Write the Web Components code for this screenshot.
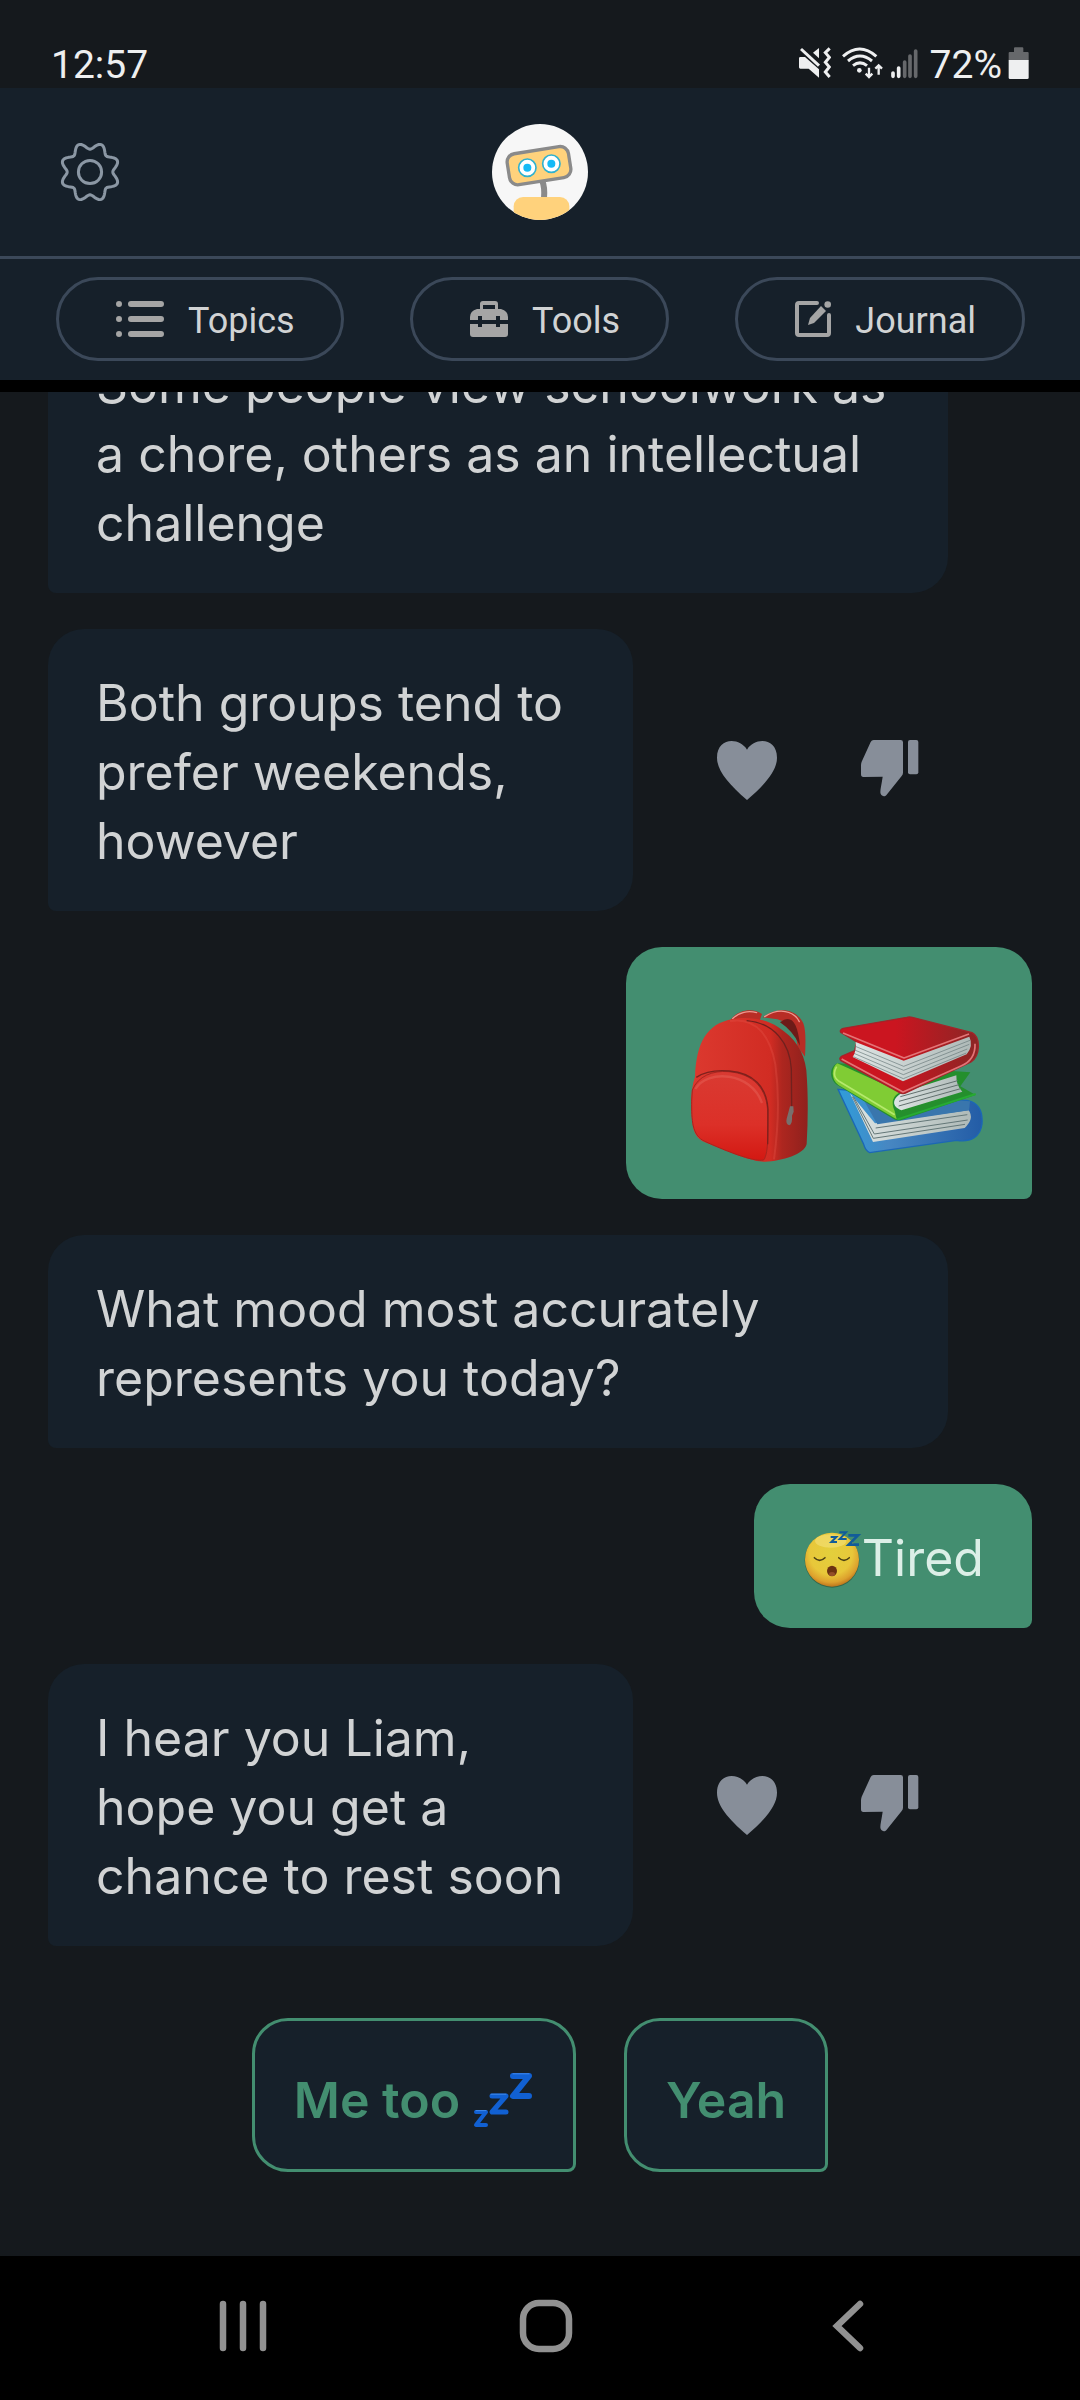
<!DOCTYPE html>
<html lang="en">
<head>
<meta charset="utf-8">
<meta name="viewport" content="width=device-width, initial-scale=1">
<title>Chat</title>
<style>
  :root {
    --page: #15191d;
    --surface: #16202a;
    --line: #3b4859;
    --green: #438e70;
    --text: #d1d3d4;
    --muted: #878e99;
  }
  body { margin: 0; background: var(--page); color: var(--text); font-family: Inter, "Liberation Sans", sans-serif; }
</style>
</head>
<body>
<chat-app></chat-app>

<template id="t-app">
  <style>
    :host { display: flex; flex-direction: column; height: 100vh; overflow: hidden; }
    chat-log { flex: 1; min-height: 0; }
  </style>
  <status-bar></status-bar>
  <app-header></app-header>
  <tab-strip>
    <pill-button icon="list">Topics</pill-button>
    <pill-button icon="toolbox">Tools</pill-button>
    <pill-button icon="journal">Journal</pill-button>
  </tab-strip>
  <chat-log>
    <chat-message>Some people view schoolwork as<br>a chore, others as an intellectual<br>challenge</chat-message>
    <chat-message rated>Both groups tend to<br>prefer weekends,<br>however</chat-message>
    <chat-message mine><ui-icon name="backpack"></ui-icon><ui-icon name="books"></ui-icon></chat-message>
    <chat-message>What mood most accurately<br>represents you today?</chat-message>
    <chat-message mine><ui-icon name="sleepy"></ui-icon>Tired</chat-message>
    <chat-message rated>I hear you Liam,<br>hope you get a<br>chance to rest soon</chat-message>
    <quick-reply slot="replies">Me too <ui-icon name="zzz"></ui-icon></quick-reply>
    <quick-reply slot="replies">Yeah</quick-reply>
  </chat-log>
  <nav-bar></nav-bar>
</template>

<template id="t-status">
  <style>
    :host { display: flex; justify-content: space-between; align-items: flex-end; height: 88px; padding: 0 51px; box-sizing: border-box; font: 39px/46px Roboto, sans-serif; color: #eeeff0; }
    .right { display: flex; align-items: center; }
    .wifi { margin: 0 7px 0 11px; }
    .pct { margin: 0 6px 0 12px; }
  </style>
  <time>12:57</time>
  <div class="right">
    <ui-icon name="mute"></ui-icon><ui-icon class="wifi" name="wifi"></ui-icon><ui-icon name="signal"></ui-icon>
    <span class="pct">72%</span><ui-icon name="battery"></ui-icon>
  </div>
</template>

<template id="t-header">
  <style>
    :host { display: grid; grid-template-columns: 1fr auto 1fr; align-items: center; height: 168px; padding: 0 60px; background: var(--surface); border-bottom: 3px solid var(--line); }
    button { all: unset; cursor: pointer; display: block; justify-self: start; }
  </style>
  <button aria-label="Settings"><ui-icon name="gear"></ui-icon></button>
  <button aria-label="Profile"><ui-icon name="robot"></ui-icon></button>
</template>

<template id="t-tabs">
  <style>
    :host { display: flex; justify-content: space-between; padding: 18px 55px 19px 56px; background: var(--surface); border-bottom: 12px solid #000; }
  </style>
  <slot></slot>
</template>

<template id="t-pill">
  <style>
    :host { display: block; }
    button { display: flex; align-items: center; gap: 24px; height: 84px; box-sizing: border-box; padding: 0 46px 0 57px; border: 3px solid var(--line); border-radius: 42px; background: none; color: var(--text); font: 36px/44px Roboto, sans-serif; cursor: pointer; }
    span { padding-top: 4px; }
  </style>
  <button><ui-icon></ui-icon><span><slot></slot></span></button>
</template>

<template id="t-log">
  <style>
    :host { display: flex; flex-direction: column; justify-content: flex-end; gap: 36px; overflow: hidden; padding: 0 48px 84px; }
    .replies { display: flex; justify-content: center; gap: 48px; padding-top: 36px; }
  </style>
  <slot></slot>
  <div class="replies"><slot name="replies"></slot></div>
</template>

<template id="t-message">
  <style>
    :host { display: flex; align-items: center; gap: 84px; flex: none; font-size: 50px; line-height: 69px; }
    .bubble { box-sizing: border-box; width: 900px; max-width: 100%; padding: 40px 48px 35px; border-radius: 36px 36px 36px 8px; background: var(--surface); }
    :host([rated]) .bubble { width: 585px; }
    :host([mine]) { justify-content: flex-end; }
    :host([mine]) .bubble { display: flex; width: auto; border-radius: 36px 36px 8px 36px; background: var(--green); color: #dcefe7; }
    button { all: unset; display: none; cursor: pointer; }
    :host([rated]) button { display: block; }
  </style>
  <div class="bubble"><slot></slot></div>
  <button aria-label="Like"><ui-icon name="heart"></ui-icon></button>
  <button aria-label="Dislike"><ui-icon name="thumb"></ui-icon></button>
</template>

<template id="t-reply">
  <style>
    :host { display: block; }
    button { display: flex; gap: 12px; padding: 45px 39px 34px; border: 3px solid var(--green); border-radius: 36px 36px 8px 36px; background: var(--surface); color: var(--green); font: 600 50px/69px Inter, "Liberation Sans", sans-serif; cursor: pointer; }
  </style>
  <button><slot></slot></button>
</template>

<template id="t-nav">
  <style>
    :host { display: flex; justify-content: space-around; align-items: center; height: 144px; padding: 0 80px 4px 92px; box-sizing: border-box; background: #000; }
    button { all: unset; display: block; cursor: pointer; }
  </style>
  <button aria-label="Recent apps"><ui-icon name="recents"></ui-icon></button>
  <button aria-label="Home"><ui-icon name="home"></ui-icon></button>
  <button aria-label="Back"><ui-icon name="back"></ui-icon></button>
</template>

<script>
  // Outline of the settings cog: a ring whose radius swells eight times per turn.
  const cogPoints = [];
  for (let i = 0; i < 144; i++) {
    const a = i * Math.PI / 72;
    const r = 26.2 + 3.4 * Math.cos(8 * (a - Math.PI / 8));
    cogPoints.push((30 + r * Math.cos(a)).toFixed(2) + ',' + (30 + r * Math.sin(a)).toFixed(2));
  }

  // name: [width, height, viewBox, markup]
  const ICONS = {
    mute: [32, 36, '84 48 96 108', `
      <path d="M88 78h14l42 37v25l-31-27H88q-4 0-4-4V82q0-4 4-4z" fill="#eeeff0"/>
      <path d="M144 51v31l-18-17z" fill="#eeeff0"/>
      <path d="M90 54l54 50" stroke="#eeeff0" stroke-width="9"/>
      <path d="M176 52l-13 13 12 14-12 15 12 14-12 15 13 15" fill="none" stroke="#eeeff0" stroke-width="9"/>`],
    wifi: [42, 36, '214 48 126 108', `
      <g fill="none" stroke="#eeeff0" stroke-width="9">
        <path d="M217 76q50-44 100 0"/><path d="M232 90q36-30 72 0"/><path d="M247 104q21-17 42 0"/>
        <path d="M295 110v26M285 128l10 10 10-10M324 131v-26M314 113l10-10 10 10" stroke-width="7"/>
      </g><circle cx="266" cy="118" r="7" fill="#eeeff0"/>`],
    signal: [27, 36, '360 48 81 108', `
      <g stroke-width="11" stroke-linecap="round">
        <path d="M366 126v10M383 111v25" stroke="#eeeff0"/>
        <path d="M401 93v43M417 75v61M434 60v76" stroke="#66686b"/>
      </g>`],
    battery: [21, 36, '715 48 63 108', `
      <path d="M733 52q0-3 3-3h22q3 0 3 3v11h13q3 0 3 3v22h-60V66q0-3 3-3h13z" fill="#66686b"/>
      <path d="M717 87h60v53q0 4-4 4h-52q-4 0-4-4z" fill="#eeeff0"/>`],
    gear: [60, 60, '0 0 60 60', `
      <g fill="none" stroke="#8b97a4" stroke-width="3" stroke-linejoin="round">
        <polygon points="${cogPoints.join(' ')}"/><circle cx="30" cy="30" r="11.6"/>
      </g>`],
    robot: [96, 96, '66 42 288 288', `
      <clipPath id="face"><circle cx="210" cy="186" r="144"/></clipPath>
      <g clip-path="url(#face)">
        <rect x="66" y="42" width="288" height="288" fill="#f7f7f7"/>
        <path d="M216 210q9 22 6 54" fill="none" stroke="#8a8a8a" stroke-width="18"/>
        <rect x="131" y="261" width="167" height="100" rx="28" fill="#ffd27c"/>
        <rect x="114" y="120" width="186" height="94" rx="25" transform="rotate(-9 207 167)" fill="#ffd27c" stroke="#8a8a8a" stroke-width="10"/>
        <g fill="#fff" stroke="#30b1cf" stroke-width="5"><circle cx="172" cy="173" r="26"/><circle cx="244" cy="161" r="26"/></g>
        <g fill="#15baf6"><circle cx="172" cy="173" r="12"/><circle cx="244" cy="161" r="12"/></g>
      </g>`],
    list: [48, 36, '0 0 48 36', `
      <g stroke="#a5a5a5" stroke-width="6" stroke-linecap="round"><path d="M3 3h0M3 18h0M3 33h0M15 3h30M15 18h30M15 33h30"/></g>`],
    toolbox: [38, 36, '0 0 38 36', `
      <path d="M10 8V3q0-3 3-3h12q3 0 3 3v5h3q7 2 7 8v3h-8v-4h-4v4H12v-4H8v4H0v-3q0-6 7-8zM13 8h12V4H13z" fill="#a5a5a5" fill-rule="evenodd"/>
      <path d="M0 23h8v3h4v-3h14v3h4v-3h8v10q0 3-3 3H3q-3 0-3-3z" fill="#a5a5a5"/>`],
    journal: [36, 36, '0 0 36 36', `
      <path d="M22 2H4Q2 2 2 4v28q0 2 2 2h28q2 0 2-2V14" fill="none" stroke="#a5a5a5" stroke-width="4" stroke-linecap="round"/>
      <path d="M26 5l5 5-12 12-6 2 2-7z" fill="#a5a5a5"/><circle cx="32.700" cy="3.500" r="3.300" fill="#a5a5a5"/>`],
    heart: [60, 60, '0 0 180 180', `
      <path d="M90 29C113-9 180-8 180 53c0 38-33 78-90 127C33 131 0 91 0 53 0-8 67-9 90 29z" fill="#878e99"/>`],
    thumb: [60, 60, '0 0 180 180', `
      <path d="M38 0h81q7 0 7 7v91q0 6-4 10l-45 56c-7 9-19 4-19-7 0-10 4-26 7-47l-58 1q-7 0-7-8V76q0-5 2-11L29 6q3-6 9-6z" fill="#878e99"/>
      <rect x="141" width="31" height="103" rx="6" fill="#878e99"/>`],
    backpack: [155, 177, '222 171 465 531', `
      <defs>
        <linearGradient id="bag" x1="0" x2="1"><stop offset="0" stop-color="#dc392f"/><stop offset=".68" stop-color="#d12c23"/><stop offset=".78" stop-color="#ad261f"/><stop offset="1" stop-color="#8f211d"/></linearGradient>
        <linearGradient id="pocket" x1="0" x2="0" y1="0" y2="1"><stop offset="0" stop-color="#d93a32"/><stop offset=".6" stop-color="#dc3028"/><stop offset="1" stop-color="#d31812"/></linearGradient>
      </defs>
      <path d="M390 272c22-35 72-39 96-20l-10 28zM488 262c42-32 99-30 122 18 8 22 7 58 5 100l-22-30c-5-50-25-72-61-82z" fill="#b82d25"/>
      <path d="M540 277c32-25 53-4 60 70q-22-45-60-70z" fill="#6d1b18"/>
      <path d="M398 266c18-20 48-25 72-18M494 260c42-28 88-18 104 15" stroke="#ed9990" stroke-width="4" fill="none" stroke-linecap="round"/>
      <path d="M285 440c4-103 36-158 110-172 42-10 102-3 139 23 50 32 78 72 85 130 6 76 5 150 1 221-7 31-73 51-125 53-30 2-90-20-180-58-24-11-34-26-38-58-6-57-5-101 8-139z" fill="url(#bag)"/>
      <path d="M390 273c85-14 122 56 136 130 12 88 9 190-4 285" stroke="#e65449" stroke-width="6" fill="none" opacity=".35"/>
      <path d="M440 272c83 6 130 69 134 145l1 112" fill="none" stroke="#70211e" stroke-width="4"/>
      <path d="M277 480c17-42 62-59 108-55 76 6 117 52 118 124 1 52 3 118-11 140-14 8-75-8-178-55-39-18-39-65-39-120z" fill="url(#pocket)" stroke="#a6251f" stroke-width="3"/>
      <path d="M289 442c30-20 66-22 99-19 73 6 112 48 116 115l-1 105" fill="none" stroke="#7e211d" stroke-width="4"/>
      <path d="M286 477c36-60 167-52 200 42" fill="none" stroke="#e86b62" stroke-width="7" opacity=".4"/>
      <path d="M570 529h10l1 16-5 12q2 25-8 29-12-5-8-20z" fill="#77706d"/>`],
    books: [155, 177, '687 171 465 531', `
      <defs>
        <linearGradient id="red"><stop offset=".4" stop-color="#cb1520"/><stop offset="1" stop-color="#8b2625"/></linearGradient>
        <linearGradient id="page"><stop offset="0" stop-color="#dde4e3"/><stop offset="1" stop-color="#afbab8"/></linearGradient>
        <linearGradient id="blue"><stop offset="0" stop-color="#309dda"/><stop offset=".35" stop-color="#4787c2"/><stop offset="1" stop-color="#235ca6"/></linearGradient>
      </defs>
      <path d="M714 478l390 34c30 7 45 31 42 70-4 37-33 56-76 49l-261 37q-12-5-18-25z" fill="url(#blue)" stroke="#1c67b5" stroke-width="4"/>
      <path d="M750 490l75 90 281-39q18 25-12 53l-275 42z" fill="url(#page)"/>
      <path d="M780 490l330 24-3 27-275 42z" fill="#3976ad"/>
      <path d="M760 500l63 112 280-42M757 500l63 125 275-42M827 594l275-40" fill="none" stroke="#647778" stroke-width="3"/>
      <path d="M712 400c-28 13-24 56 8 70l162 98q10 5 25 1l220-74-46-26 30-42z" fill="#248f2d"/>
      <path d="M712 400l190 86q-36 17-18 57l6 25L716 466c-24-17-22-54-4-66z" fill="#80cc34"/>
      <path d="M909 487l160-51q-1 31 18 49l-183 56c-29-12-30-34 5-54z" fill="url(#page)"/>
      <path d="M901 500l172-48M897 514l180-50M896 528l186-52" stroke="#62706e" stroke-width="3"/>
      <path d="M710 410q-18 30 12 47l162 97" fill="none" stroke="#b5e96c" stroke-width="5"/>
      <path d="M892 568l235-76" stroke="#27ab32" stroke-width="6"/>
      <path d="M722 307q-4-8 8-12l190-33q8-2 17 0l179 46c27 14 25 70-3 88L919 488q-10 5-20 0l-176-96q-8-7 3-14l38-16 6-26z" fill="url(#red)" stroke="#a3252a" stroke-width="4"/>
      <path d="M767 336l144 56 197-72q13 27-8 53l-191 81-151-73q12-17 9-45z" fill="url(#page)"/>
      <path d="M766 349l145 60 199-78M764 360l147 61 197-78M762 370l148 64 192-77M760 380l150 66 189-77" fill="none" stroke="#68797a" stroke-width="2"/>
      <path d="M729 309l183 75 195-72M725 387l184 99 174-78q44-19 42-67" fill="none" stroke="#e37477" stroke-width="5" stroke-linejoin="round"/>`],
    sleepy: [60, 69, '309 192 180 207', `
      <defs><radialGradient id="skin" cx=".48" cy=".38" r=".64"><stop offset="0" stop-color="#e3cf3c"/><stop offset=".62" stop-color="#e8c73a"/><stop offset=".84" stop-color="#dda12d"/><stop offset="1" stop-color="#b66a18"/></radialGradient></defs>
      <circle cx="399" cy="301" r="82" fill="#356749"/>
      <circle cx="399" cy="299" r="81" fill="url(#skin)"/>
      <ellipse cx="395" cy="243" rx="47" ry="20" fill="#fff2a6" opacity=".35"/>
      <path d="M346 293q16 16 32 0M419 293q16 16 32 0" fill="none" stroke="#4c4015" stroke-width="4.5" stroke-linecap="round"/>
      <ellipse cx="399" cy="333" rx="15" ry="16" fill="#6b3211"/><ellipse cx="399" cy="342" rx="9" ry="6" fill="#934e28"/>
      <g fill="none" stroke="#125c99" stroke-width="6"><polyline points="395,231 412,231 397,246 414,246"/><polyline points="421,217 441,217 422,237 443,237"/><polyline points="448,226 477,226 449,254 480,254" stroke-width="8"/></g>`],
    zzz: [62, 69, '0 4 62 69', `
      <g fill="none" stroke="#1160d2" stroke-linejoin="round" stroke-linecap="round">
        <polyline points="4,50 14,50 4,63 14,63" stroke-width="4"/>
        <polyline points="20,34 34,34 20,50 34,50" stroke-width="5"/>
        <polyline points="41,14 57,14 41,34 57,34" stroke-width="6"/>
      </g>
      <path d="M4 48.600h10M19 32.200h15M41 11.800h16" stroke="#3f88ea" stroke-width="1" stroke-linecap="round"/>`],
    recents: [54, 54, '0 0 54 54', `
      <path d="M7 5v44M27 5v44M47 5v44" stroke="#919191" stroke-width="6.500" stroke-linecap="round"/>`],
    home: [54, 54, '0 0 54 54', `
      <rect x="4" y="4" width="46" height="46" rx="16" fill="none" stroke="#919191" stroke-width="6.500"/>`],
    back: [54, 54, '0 0 54 54', `
      <path d="M38 5L15 27l23 22" fill="none" stroke="#919191" stroke-width="6.500" stroke-linecap="round"/>`]
  };

  class UiIcon extends HTMLElement {
    static observedAttributes = ['name'];
    constructor() { super(); this.attachShadow({ mode: 'open' }); }
    attributeChangedCallback() {
      const [w, h, box, body] = ICONS[this.getAttribute('name')];
      this.shadowRoot.innerHTML = `<style>:host{display:block;flex:none}svg{display:block}</style>
        <svg width="${w}" height="${h}" viewBox="${box}" aria-hidden="true">${body}</svg>`;
    }
  }
  customElements.define('ui-icon', UiIcon);

  const fromTemplate = id => class extends HTMLElement {
    constructor() {
      super();
      this.attachShadow({ mode: 'open' }).append(document.getElementById(id).content.cloneNode(true));
    }
  };

  customElements.define('status-bar', fromTemplate('t-status'));
  customElements.define('app-header', fromTemplate('t-header'));
  customElements.define('tab-strip', fromTemplate('t-tabs'));
  customElements.define('pill-button', class extends fromTemplate('t-pill') {
    connectedCallback() {
      this.shadowRoot.querySelector('ui-icon').setAttribute('name', this.getAttribute('icon'));
    }
  });
  customElements.define('chat-message', fromTemplate('t-message'));
  customElements.define('quick-reply', fromTemplate('t-reply'));
  customElements.define('chat-log', fromTemplate('t-log'));
  customElements.define('nav-bar', fromTemplate('t-nav'));
  customElements.define('chat-app', fromTemplate('t-app'));
</script>
</body>
</html>
